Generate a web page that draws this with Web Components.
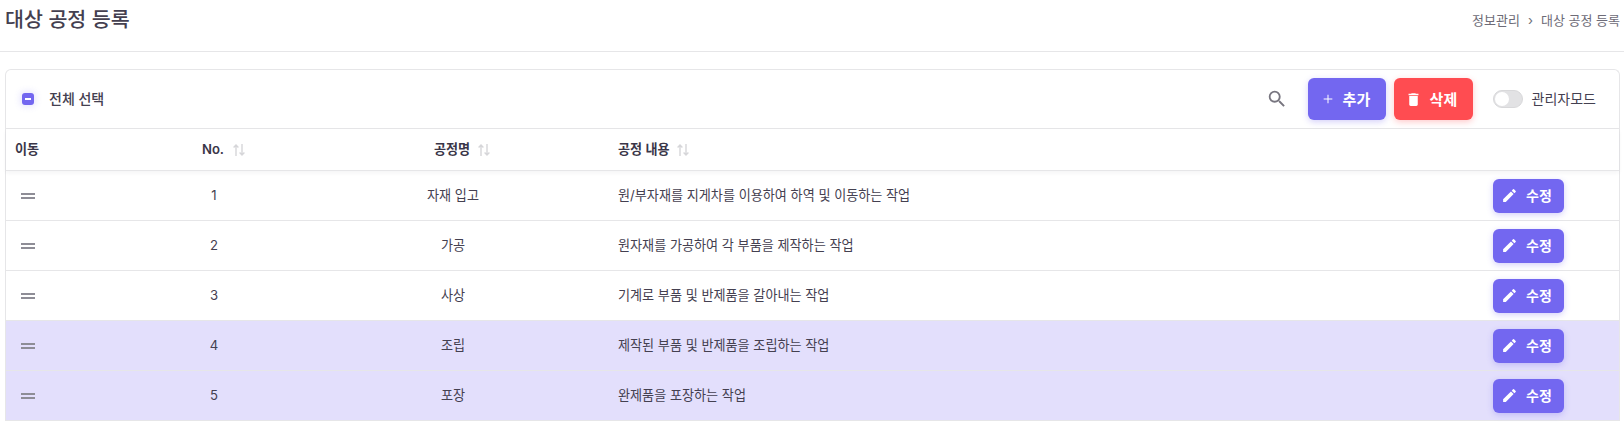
<!DOCTYPE html>
<html lang="ko"><head><meta charset="utf-8"><title>대상 공정 등록</title>
<style>
html,body{margin:0;padding:0;background:#fff;height:424px;overflow:hidden}
body{font-family:Inter,"Noto Sans CJK KR",sans-serif;color:#444050}
</style></head><body>
<page-head heading="대상 공정 등록" parent="정보관리"></page-head>
<list-card>
  <list-toolbar></list-toolbar>
  <list-head></list-head>
  <list-row no="1" name="자재 입고" desc="원/부자재를 지게차를 이용하여 하역 및 이동하는 작업"></list-row>
  <list-row no="2" name="가공" desc="원자재를 가공하여 각 부품을 제작하는 작업"></list-row>
  <list-row no="3" name="사상" desc="기계로 부품 및 반제품을 갈아내는 작업"></list-row>
  <list-row no="4" name="조립" desc="제작된 부품 및 반제품을 조립하는 작업" selected></list-row>
  <list-row no="5" name="포장" desc="완제품을 포장하는 작업" selected></list-row>
</list-card>
<script>
const GRID='grid-template-columns:124px 168px 310px minmax(0,1fr) 136px;';
function def(name,html){customElements.define(name,class extends HTMLElement{connectedCallback(){if(this.shadowRoot)return;const r=this.attachShadow({mode:'open'});r.innerHTML=typeof html==='function'?html(this):html;}});}
def('page-head',el=>`<style>
:host{display:flex;justify-content:space-between;align-items:flex-start;height:52px;box-sizing:border-box;border-bottom:1px solid #e6e6e8;padding:0 4px 0 5px}
h1{margin:7px 0 0;font-size:20.6px;line-height:26px;font-weight:500;color:#444050}
nav{display:flex;gap:8px;margin-top:11px;font-size:13px;line-height:18px;color:#6d6b77}
</style><h1>${el.getAttribute('heading')}</h1><nav><span>${el.getAttribute('parent')}</span><span>›</span><span>${el.getAttribute('heading')}</span></nav>`);
def('list-card',`<style>:host{display:block;margin:17px 4px 0 5px;border:1px solid #e6e6e8;border-bottom:0;border-radius:6px 6px 0 0;background:#fff}</style><slot></slot>`);
def('action-btn',`<style>
:host{display:inline-flex;align-items:center;box-sizing:border-box;height:var(--h,42px);width:var(--w,78px);padding-left:var(--pl,12px);gap:var(--g,7px);border-radius:6px;background:var(--bg,#7367f0);color:#fff;font-size:var(--fs,15px);font-weight:600;box-shadow:0 2px 6px var(--sh,rgba(115,103,240,.3))}
</style><slot></slot>`);
const SEARCH='M15.5 14h-.79l-.28-.27A6.47 6.47 0 0 0 16 9.5 6.5 6.5 0 1 0 9.5 16c1.61 0 3.09-.59 4.23-1.57l.27.28v.79l5 4.99L20.49 19l-4.99-5zm-6 0C7.01 14 5 11.99 5 9.5S7.01 5 9.5 5 14 7.01 14 9.5 11.99 14 9.5 14z';
const TRASH='M6 19c0 1.1.9 2 2 2h8c1.1 0 2-.9 2-2V7H6v12zM19 4h-3.5l-1-1h-5l-1 1H5v2h14V4z';
const EDIT='M3 17.25V21h3.75L17.81 9.94l-3.75-3.75L3 17.25zM20.71 7.04a1 1 0 0 0 0-1.41l-2.34-2.34a1 1 0 0 0-1.41 0l-1.83 1.83 3.75 3.75 1.83-1.83z';
const PLUS='M18.5 12.75h-5.75v5.75h-1.5v-5.75H5.5v-1.5h5.75V5.5h1.5v5.75h5.75z';
def('list-toolbar',`<style>
:host{display:flex;align-items:center;height:59px;box-sizing:border-box;border-bottom:1px solid #e6e6e8;padding:0 23px 0 16px;font-size:14px;font-weight:500}
.box{width:12px;height:12px;border-radius:3px;background:#7367f0;box-shadow:0 0 6px 2px rgba(115,103,240,.16);display:flex;align-items:center;justify-content:center}
.box i{width:6px;height:1.6px;background:#fff;display:block}
.label{margin-left:15px;padding-bottom:2px}
.sp{flex:1}
.search{width:22px;height:22px;fill:#77757f;display:block;margin-right:20px}
svg.w{fill:#fff;display:block}
action-btn span{padding-bottom:2px}
action-btn+action-btn{margin-left:8px}
.tg{width:30px;height:18px;box-sizing:border-box;border-radius:9px;background:#e2e2e4;border:1px solid #d8d8da;margin-left:20px;display:flex;align-items:center;padding-left:1px}
.tg i{width:14px;height:14px;border-radius:50%;background:#fff;display:block}
.mode{margin-left:9px;font-size:14px;font-weight:400;color:#444050;padding-bottom:2px}
</style>
<span class="box"><i></i></span><span class="label">전체 선택</span><span class="sp"></span>
<svg class="search" viewBox="0 0 24 24"><path d="${SEARCH}"/></svg>
<action-btn style="--w:78px"><svg class="w" width="16" height="16" viewBox="0 0 24 24"><path d="${PLUS}"/></svg><span>추가</span></action-btn>
<action-btn style="--w:79px;--pl:11px;--g:8px;--bg:#ff4c51;--sh:rgba(255,76,81,.3)"><svg class="w" width="17" height="17" viewBox="0 0 24 24"><path d="${TRASH}"/></svg><span>삭제</span></action-btn>
<span class="tg"><i></i></span><span class="mode">관리자모드</span>`);
const sortIcon=`<svg viewBox="0 0 14 14" width="14" height="14" fill="none" stroke="#d6d6d9" stroke-width="1.4"><path d="M4 13V2M1.6 4.4 4 2l2.4 2.4M10 1v11M7.6 9.6 10 12l2.4-2.4"/></svg>`;
def('list-head',`<style>
:host{display:grid;${GRID}height:41px;align-items:center;border-bottom:1px solid #e6e6e8;box-shadow:0 2px 4px rgba(47,43,61,.05);font-size:13.125px;font-weight:600;color:#3a3648;position:relative}
.c{display:flex;align-items:center;justify-content:center;gap:8px;min-width:0}
.c span{padding-bottom:2px}
.l{justify-content:flex-start;padding-left:9px}
.a{padding-left:20px}
.b{padding-left:19px;gap:7px}
.d{padding-left:10px;gap:6px}
svg{display:block}
</style>
<div class="c l"><span>이동</span></div><div class="c a"><span>No.</span>${sortIcon}</div><div class="c b"><span>공정명</span>${sortIcon}</div><div class="c l d"><span>공정 내용</span>${sortIcon}</div><div></div>`);
def('list-row',el=>`<style>
:host{display:grid;${GRID}height:50px;align-items:center;box-sizing:border-box;border-bottom:1px solid #e6e6e8;font-size:13.125px;color:#444050}
:host([selected]){background:#e3dffc}
.h{width:14px;height:6px;margin:1px 0 0 15px;border-top:2px solid #8e8d96;border-bottom:2px solid #8e8d96;box-sizing:border-box}
.m{text-align:center;padding-bottom:2px}
.t{padding:0 0 2px 10px}
.e{padding-left:10px;display:flex}
svg{fill:#fff;display:block}
action-btn span{padding-bottom:2px}
</style>
<div><div class="h"></div></div><div class="m">${el.getAttribute('no')}</div><div class="m">${el.getAttribute('name')}</div><div class="t">${el.getAttribute('desc')}</div>
<div class="e"><action-btn style="--h:34px;--w:71px;--g:8px;--pl:8px;--fs:14px"><svg width="17" height="17" viewBox="0 0 24 24"><path d="${EDIT}"/></svg><span>수정</span></action-btn></div>`);
</script>
</body></html>
